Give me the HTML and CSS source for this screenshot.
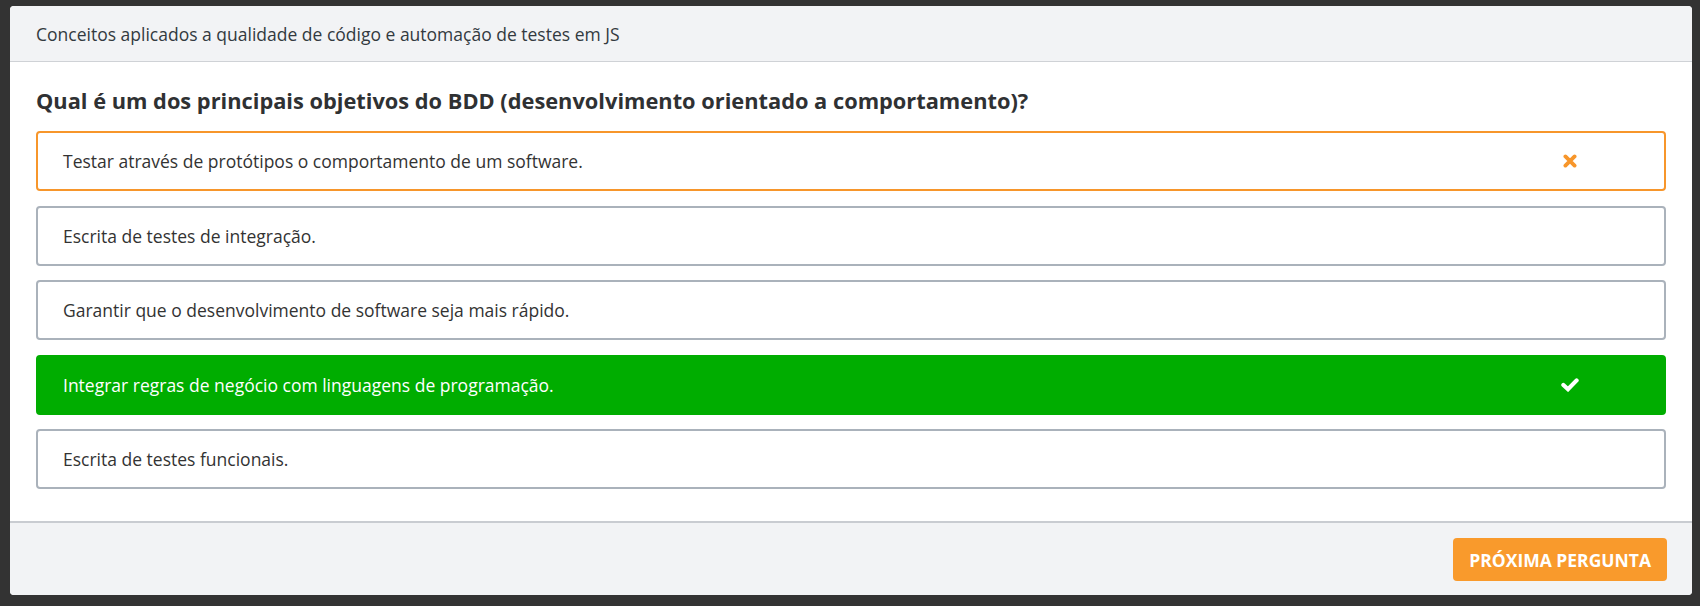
FILE: index.html
```html
<!DOCTYPE html>
<html lang="pt-BR">
<head>
<meta charset="utf-8">
<title>Quiz</title>
<link rel="stylesheet" href="styles.css">
</head>
<body>
<div class="panel">
  <div class="panel-header">Conceitos aplicados a qualidade de código e automação de testes em JS</div>
  <div class="panel-body">
    <h2 class="question">Qual é um dos principais objetivos do BDD (desenvolvimento orientado a comportamento)?</h2>
    <div class="options">
      <div class="option option-wrong">
        <span class="option-text">Testar através de protótipos o comportamento de um software.</span>
        <svg class="icon icon-x" viewBox="0 0 14 14" width="14" height="14"><path d="M2.4 2.4 L11.6 11.6 M11.6 2.4 L2.4 11.6" stroke="#f7962b" stroke-width="3.8" stroke-linecap="round" fill="none"/></svg>
      </div>
      <div class="option"><span class="option-text">Escrita de testes de integração.</span></div>
      <div class="option"><span class="option-text">Garantir que o desenvolvimento de software seja mais rápido.</span></div>
      <div class="option option-right">
        <span class="option-text">Integrar regras de negócio com linguagens de programação.</span>
        <svg class="icon icon-check" viewBox="0 0 18 15" width="18" height="15"><path d="M2.4 8 L7 12.2 L15.6 3.4" stroke="#ffffff" stroke-width="4.2" stroke-linecap="round" stroke-linejoin="miter" fill="none"/></svg>
      </div>
      <div class="option"><span class="option-text">Escrita de testes funcionais.</span></div>
    </div>
  </div>
  <div class="panel-footer">
    <button class="btn-next" type="button">PRÓXIMA PERGUNTA</button>
  </div>
</div>
</body>
</html>
```

FILE: styles.css
```css
html, body {
  margin: 0;
  padding: 0;
  background: #333333;
}
body {
  padding: 6px 8px 11px 10px;
  font-family: "Open Sans", "Noto Sans", sans-serif;
  color: #333333;
}
.panel {
  background: #ffffff;
  border-radius: 4px;
  overflow: hidden;
}
.panel-header {
  height: 55px;
  display: flex;
  align-items: center;
  padding: 0 26px;
  background: #f2f3f5;
  border-bottom: 1px solid #cfd2d6;
  font-size: 17.5px;
  color: #333a40;
}
.panel-body {
  padding: 24px 26px 32px;
}
.question {
  margin: 0 0 16px;
  font-size: 21.8px;
  line-height: 29px;
  font-weight: 700;
  color: #2f3133;
}
.options {
  display: flex;
  flex-direction: column;
  gap: 14.5px;
}
.option {
  box-sizing: border-box;
  height: 60px;
  display: flex;
  align-items: center;
  padding: 0 87px 0 25px;
  border: 2px solid #aab2bb;
  border-radius: 4px;
  font-size: 17.5px;
  color: #333333;
}
.option-text {
  flex: 1;
}
.option-wrong {
  border-color: #f7962b;
}
.option-right {
  background: #00ad00;
  border-color: #00ad00;
  color: #ffffff;
  padding-right: 85px;
}
.icon {
  flex: none;
}
.panel-footer {
  display: flex;
  justify-content: flex-end;
  padding: 15px 25px 14px;
  background: #f2f3f5;
  border-top: 2px solid #c9ccd1;
}
.btn-next {
  height: 43px;
  padding: 0 16px;
  border: none;
  border-radius: 4px;
  background: #f99a2c;
  color: #ffffff;
  font-family: "Open Sans", "Noto Sans", sans-serif;
  font-size: 17.5px;
  font-weight: 700;
}
```
